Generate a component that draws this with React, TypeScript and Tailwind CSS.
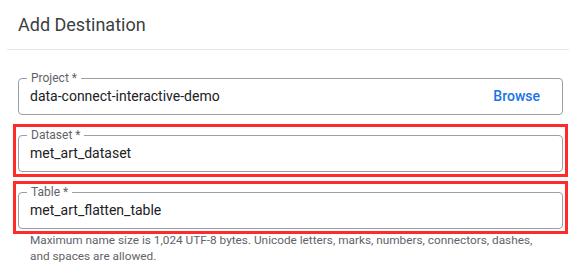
import React from 'react';

type FieldProps = {
  label: string;
  value: string;
  action?: string;
  highlighted?: boolean;
};

function Field({ label, value, action, highlighted }: FieldProps) {
  return (
    <div className="relative">
      <fieldset className="border border-[#9aa0a6] rounded-[4px] pl-[11px] pr-[22px] pb-[8px] h-[43px]">
        <legend className="ml-[-3px] px-1 text-[12px] leading-3 text-[#5f6368]">
          {label}
        </legend>
        <div className="flex items-center justify-between pt-[2px]">
          <span className="text-[14px] leading-5 text-[#202124]">{value}</span>
          {action && (
            <button className="text-[14px] leading-5 font-medium text-[#1a73e8]">
              {action}
            </button>
          )}
        </div>
      </fieldset>
      {highlighted && (
        <span className="pointer-events-none absolute -inset-[5px] border-[3px] border-[#ff2a2a]" />
      )}
    </div>
  );
}

export default function App() {
  return (
    <div className="w-[576px] h-[273px] bg-white font-['Roboto','Liberation_Sans',sans-serif]">
      <div className="mx-[7px] border-b border-[#e6e7ee] pl-[11px] pt-[13px] pb-[12px]">
        <h2 className="text-[18px] leading-6 text-[#3c4043]">Add Destination</h2>
      </div>

      <div className="pl-[18px] pr-[13px] pt-[22px] flex flex-col">
        <div className="flex flex-col gap-[14px]">
          <Field
            label="Project *"
            value="data-connect-interactive-demo"
            action="Browse"
          />
          <Field label="Dataset *" value="met_art_dataset" highlighted />
          <Field label="Table *" value="met_art_flatten_table" highlighted />
        </div>
        <p className="mt-[3px] pl-3 text-[11.8px] leading-4 text-[#5f6368]">
          Maximum name size is 1,024 UTF-8 bytes. Unicode letters, marks,
          numbers, connectors, dashes,
          <br />
          and spaces are allowed.
        </p>
      </div>
    </div>
  );
}
